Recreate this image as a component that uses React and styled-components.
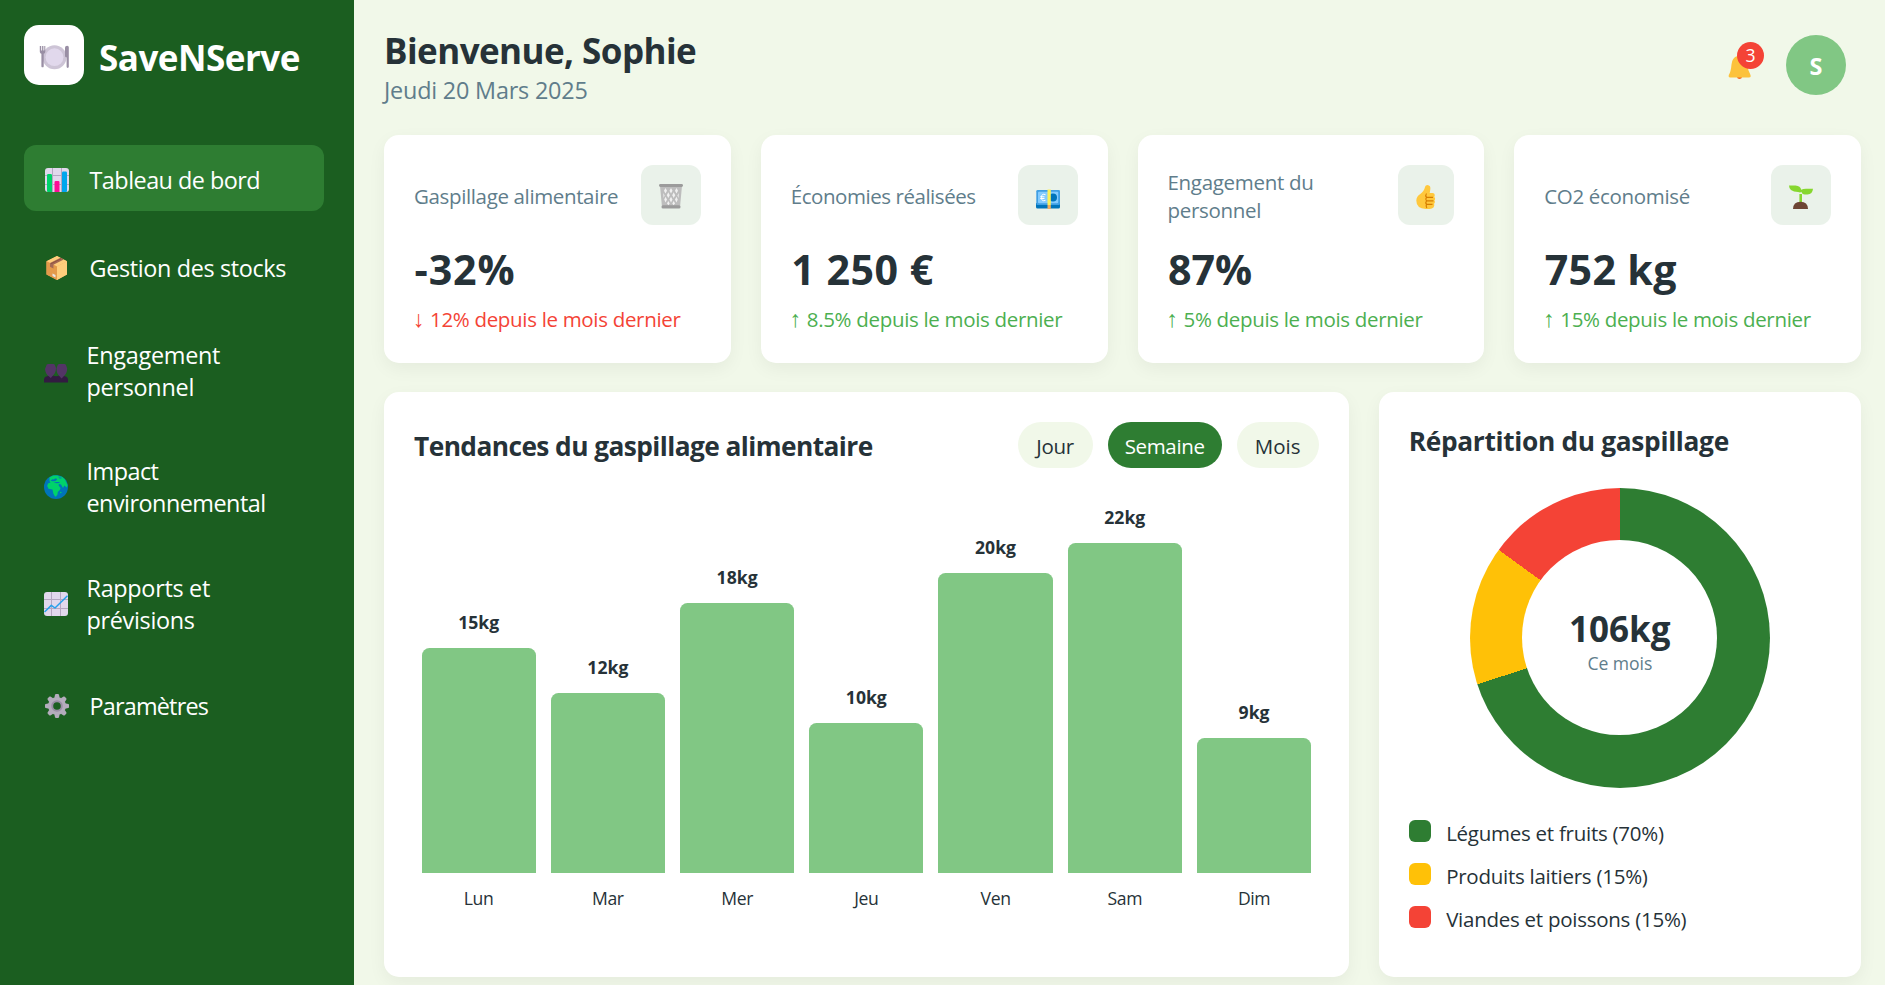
import React from "react";
import styled, { createGlobalStyle } from "styled-components";

const c = {
  dark: "#1b5e20",
  primary: "#2e7d32",
  light: "#81c784",
  bg: "#f1f8e9",
  text: "#263238",
  muted: "#607d8b",
  red: "#f44336",
  amber: "#ffc107",
  green: "#4caf50",
};

const GlobalStyle = createGlobalStyle`
  * { box-sizing: border-box; }
  body {
    margin: 0;
    overflow: hidden;
    background: ${c.bg};
    color: ${c.text};
    font-family: "Open Sans", "Noto Sans", sans-serif;
  }
  svg { display: block; flex: none; }
`;

const Page = styled.div`
  display: flex;
  height: 985px;
`;

/* ---------- Sidebar ---------- */

const Sidebar = styled.aside`
  flex: none;
  width: 354px;
  padding: 25px 30px 0 24px;
  background: ${c.dark};
  color: #fff;
`;

const Brand = styled.div`
  display: flex;
  align-items: center;
  gap: 15px;
  margin-bottom: 60px;
`;

const BrandMark = styled.div`
  display: grid;
  place-items: center;
  width: 60px;
  height: 60px;
  padding-top: 4px;
  border-radius: 15px;
  background: #fff;
`;

const BrandName = styled.div`
  padding-top: 5px;
  font-size: 35px;
  line-height: 40px;
  font-weight: 700;
  letter-spacing: -0.5px;
`;

const Nav = styled.nav`
  display: flex;
  flex-direction: column;
  gap: 22.5px;
`;

const NavItem = styled.a`
  display: flex;
  align-items: center;
  gap: 19px;
  height: ${(p) => (p.$tall ? 94 : 66)}px;
  padding: 0 19.5px;
  border-radius: 12px;
  background: ${(p) => (p.$active ? c.primary : "transparent")};
`;

const NavIcon = styled.span`
  display: flex;
  flex: none;
  justify-content: center;
  width: ${(p) => (p.$tall ? 24 : 27)}px;
  padding-top: 3px;
`;

const NavLabel = styled.span`
  padding-top: 3px;
  font-size: 23.4px;
  line-height: 32px;
  letter-spacing: ${(p) => p.$track}px;
`;

/* ---------- Header ---------- */

const Main = styled.main`
  flex: 1;
  padding: 30px 24px 0 30px;
`;

const Header = styled.header`
  display: flex;
  justify-content: space-between;
  align-items: flex-start;
  height: 105px;
  padding-right: 15px;
`;

const Welcome = styled.h1`
  margin: 0;
  padding: 1px 0 3px;
  font-size: 35px;
  line-height: 40px;
  font-weight: 700;
  letter-spacing: -0.56px;
`;

const Today = styled.div`
  color: ${c.muted};
  font-size: 23.4px;
  line-height: 32px;
  letter-spacing: -0.2px;
`;

const UserArea = styled.div`
  display: flex;
  align-items: flex-start;
  gap: 34px;
  padding-top: 5px;
`;

const Bell = styled.div`
  position: relative;
  margin-top: 19px;
`;

const Badge = styled.span`
  position: absolute;
  top: -12px;
  left: 9px;
  width: 27px;
  height: 27px;
  border-radius: 50%;
  background: ${c.red};
  color: #fff;
  font-size: 17.6px;
  line-height: 27px;
  text-align: center;
`;

const Avatar = styled.div`
  width: 60px;
  height: 60px;
  border-radius: 50%;
  background: ${c.light};
  color: #fff;
  font-size: 23.4px;
  font-weight: 700;
  line-height: 62px;
  text-align: center;
`;

/* ---------- Cards ---------- */

const Card = styled.section`
  border-radius: 15px;
  background: #fff;
  box-shadow: 0 6px 18px rgba(0, 0, 0, 0.05);
  padding: 30px;
`;

const Stats = styled.div`
  display: grid;
  grid-template-columns: repeat(4, 1fr);
  gap: 30px;
  height: 226.4px;
  margin-bottom: 30.6px;
`;

const StatHead = styled.div`
  display: flex;
  align-items: center;
  justify-content: space-between;
  height: 60px;
  margin-bottom: 16px;
`;

const StatTitle = styled.h3`
  margin: 0;
  padding-top: 2px;
  max-width: 206px;
  color: ${c.muted};
  font-size: 20.5px;
  font-weight: 400;
  line-height: 28px;
  letter-spacing: ${(p) => p.$track}px;
`;

const StatIcon = styled.div`
  display: grid;
  flex: none;
  place-items: center;
  width: ${(p) => p.$width}px;
  height: 60px;
  padding-top: 3px;
  border-radius: 12px;
  background: rgba(46, 125, 50, 0.1);
`;

const StatValue = styled.div`
  margin-bottom: 7.5px;
  padding-left: 0.5px;
  font-size: 41.2px;
  font-weight: 700;
  line-height: 56px;
  letter-spacing: ${(p) => p.$track}px;
`;

const Delta = styled.div`
  display: flex;
  color: ${(p) => (p.$down ? c.red : c.green)};
  font-size: 20.5px;
  line-height: 28px;
  letter-spacing: -0.32px;
  white-space: nowrap;
`;

const Arrow = styled.span`
  width: 16px;
  margin-left: -1px;
  margin-right: 1px;
  font-family: "Liberation Sans", sans-serif;
  font-size: 23px;
`;

/* ---------- Charts ---------- */

const Charts = styled.div`
  display: grid;
  grid-template-columns: 2fr 1fr;
  gap: 30px;
  height: 585px;
`;

const ChartHead = styled.div`
  display: flex;
  align-items: center;
  justify-content: space-between;
`;

const ChartTitle = styled.h2`
  margin: 0;
  padding-top: 2px;
  font-size: 26.3px;
  font-weight: 700;
  line-height: 34px;
  letter-spacing: ${(p) => p.$track}px;
`;

const Periods = styled.div`
  display: flex;
  gap: 15px;
`;

const Period = styled.button`
  width: ${(p) => p.$width}px;
  height: 46px;
  padding: 3px 0 0;
  border: 0;
  border-radius: 23px;
  background: ${(p) => (p.$active ? c.primary : c.bg)};
  color: ${(p) => (p.$active ? "#fff" : c.text)};
  font: 400 20.5px/28px "Open Sans", sans-serif;
  letter-spacing: ${(p) => p.$track}px;
`;

const Bars = styled.div`
  display: flex;
  align-items: flex-end;
  gap: 15px;
  height: 442px;
  padding: 0 7.5px;
`;

const BarColumn = styled.div`
  flex: 1;
  text-align: center;
  font-size: 17.6px;
  line-height: 24px;
`;

const BarValue = styled.div`
  margin-bottom: 14px;
  font-weight: 700;
`;

const Bar = styled.div`
  height: ${(p) => p.$kg * 15}px;
  margin-bottom: 13px;
  border-radius: 7.5px 7.5px 0 0;
  background: ${c.light};
`;

const BarDay = styled.div`
  letter-spacing: -0.4px;
`;

const Donut = styled.div`
  display: grid;
  place-items: center;
  width: 300px;
  height: 300px;
  margin: 30px auto;
  border-radius: 50%;
  background: conic-gradient(${c.primary} 0 70%, ${c.amber} 70% 85%, ${c.red} 85% 100%);
`;

const DonutHole = styled.div`
  display: flex;
  flex-direction: column;
  align-items: center;
  justify-content: center;
  gap: 4px;
  width: 195px;
  height: 195px;
  padding-top: 10px;
  border-radius: 50%;
  background: #fff;
`;

const DonutTotal = styled.div`
  font-size: 35px;
  font-weight: 700;
  line-height: 36px;
`;

const DonutCaption = styled.div`
  color: ${c.muted};
  font-size: 17.6px;
  line-height: 24px;
  letter-spacing: -0.06px;
`;

const Legend = styled.ul`
  display: flex;
  flex-direction: column;
  gap: 15px;
  margin: 0;
  padding: 0;
  list-style: none;
`;

const LegendItem = styled.li`
  display: flex;
  gap: 15px;
  height: 28px;
  font-size: 20.5px;
  letter-spacing: -0.26px;
`;

const Swatch = styled.span`
  width: 22.5px;
  height: 22.5px;
  margin-top: 2px;
  border-radius: 6px;
  background: ${(p) => p.$color};
`;

const LegendLabel = styled.span`
  padding-top: 2px;
  line-height: 27px;
`;

/* ---------- Icons ---------- */

const PlateIcon = () => (
  <svg width="30" height="25" viewBox="0 0 30 25">
    <circle cx="15.5" cy="12.2" r="12" fill="#cdc4d6" />
    <circle cx="15.5" cy="12.2" r="8.9" fill="#e1d8ec" />
    <path d="M.8.9v5.6c0 1.3.7 2 1.6 2.2v12.8a1.2 1.2 0 0 0 2.3 0V8.7c1-.2 1.6-.9 1.6-2.2V.9h-1v4.6h-.9V.9H3.100v4.600h-.9V.9z" fill="#998ea4" />
    <path d="M26 3.2C26 1.6 27 .8 28.2.8c1 0 1.6.7 1.6 1.7v19.3a1.100 1.100 0 0 1-2.200 0v-9.600c-1 0-1.600-.5-1.600-1.500z" fill="#998ea4" />
  </svg>
);

const BarChartIcon = () => (
  <svg width="24" height="24" viewBox="0 0 24 24">
    <rect width="24" height="24" rx="3" fill="#e1d8ec" />
    <path d="M0 7.5h24M0 16.5h24M7.5 0v24M16.5 0v24" stroke="#b4a7c1" strokeWidth="1" />
    <path d="M2 7.2Q2 6 3.2 6h2.6Q7 6 7 7.2V24H3q-1 0-1-1z" fill="#00d26a" />
    <path d="M9.5 14.2q0-1.200 1.200-1.200h2.600q1.200 0 1.200 1.200V24h-5z" fill="#fc0e95" />
    <path d="M17 4.7q0-1.200 1.200-1.200h2.600Q22 3.500 22 4.700V23q0 1-1 1h-4z" fill="#00a6ed" />
  </svg>
);

const BoxIcon = () => (
  <svg width="24" height="24" viewBox="0 0 24 24">
    <path d="M12 0 22 5.2v13.3L12 24 1.5 18.5V5.2z" fill="#f3ad61" />
    <path d="M12 0 22 5.2 12 10.5 1.5 5.2z" fill="#ffce7c" />
    <path d="M12 10.5 22 5.2v13.3L12 24z" fill="#ffce7c" />
    <path d="M1.5 5.2 12 10.5V24L1.5 18.5z" fill="#e39a4b" />
    <path d="m5 7 10.5-5.200 3.300 1.700L8.400 8.800v3.800L5 10.800z" fill="#a56953" />
    <path d="m6 7.700 10.500-5.200" stroke="#8a4f3b" strokeWidth=".8" />
    <path d="m7.5 17.5 3 1.500v2.600l-3-1.500z" fill="#e6e6e6" />
  </svg>
);

const PeopleIcon = () => (
  <svg width="24" height="24" viewBox="0 0 24 24">
    <path d="M0 23.500v-3C0 18.500 1.500 17.300 4 17l3-.5 5 .8 5-.8 3 .5c2.500.3 4 1.500 4 3.500v3z" fill="#321b41" />
    <path d="M4.300 5h5.200q1.500 0 1.500 1.500l1 2.500q0 5-3 7.500l-2.200 2.500L4.500 17Q1.300 14.500 1 10l1.200-3Q2.200 5 4.300 5z" fill="#533566" />
    <path d="M15.300 5h5.200q1.500 0 1.700 1.700l1 2.800q-.2 5-3.200 7.500L17.500 19.500 15.300 17q-2.800-2.500-2.800-7.500l1-3q0-1.500 1.800-1.500z" fill="#533566" />
  </svg>
);

const GlobeIcon = () => (
  <svg width="24" height="24" viewBox="0 0 24 24">
    <circle cx="12" cy="12" r="12" fill="#0074ba" />
    <path d="M5.500 2.500 9 .5h4.500l2 1L18 1.700l3 2.800L23.500 10l-.7 2.500-2.500-2L19 13l-2-3.500-1.500-.5-1.200.8 1.500 2.500.8.600-.8 2-2 2.200-.3 2.500-1.500 2h-1L9.300 18.500l-.8-4-4-.8L3.200 11 4 8.500l2.500-1L5.500 6z" fill="#00d26a" />
    <path d="m6.500 5.500 2-1.200 1.500.3 1-1h1.500l.5 1-1.500 1.500-3 .2zM9.500 7h6v1l-3 .3zM14 1.500l1.500 1h2v1h-2z" fill="#0074ba" />
    <circle cx="16.800" cy="17.500" r=".8" fill="#00d26a" />
  </svg>
);

const TrendIcon = () => (
  <svg width="24" height="24" viewBox="0 0 24 24">
    <rect width="24" height="24" rx="3" fill="#e1d8ec" />
    <path d="M0 7.500h24M0 16.500h24M7.500 0v24M16.500 0v24" stroke="#b4a7c1" strokeWidth="1" />
    <path d="m.5 20 6.800-6.600 3.700 2.600L23.500 3.800" fill="none" stroke="#26a0ec" strokeWidth="1.500" strokeLinejoin="round" />
  </svg>
);

const GearIcon = () => (
  <svg width="24" height="24" viewBox="0 0 24 24">
    {[0, 45, 90, 135].map((angle) => (
      <path key={angle} d="M9.500 3 10 .7Q10.200 0 11 0h2q.8 0 1 .7L14.500 3v18l-.5 2.300q-.2.700-1 .700h-2q-.8 0-1-.700L9.500 21z" fill="#b4acbc" transform={`rotate(${angle} 12 12)`} />
    ))}
    <circle cx="12" cy="12" r="9" fill="#b4acbc" />
    <circle cx="12" cy="12" r="4.800" fill={c.dark} stroke="#998ea4" strokeWidth="2" />
  </svg>
);

const TrashIcon = () => (
  <svg width="24" height="25" viewBox="0 0 24 25">
    <path d="M1 2h22l-2 21H3z" fill="#bdbdbd" />
    <path d="m6.500 4 1.500 2.800-1.500 2.800L5 6.800zM12 4l1.500 2.800L12 9.600l-1.500-2.800zM17.500 4 19 6.800l-1.500 2.800L16 6.800zM9.300 8.300l1.500 2.900-1.500 2.900-1.500-2.900zM14.700 8.300l1.500 2.900-1.500 2.900-1.500-2.900zM4.300 9l1.300 2.500-1 2.500zM19.800 9l-1.400 2.500 1.100 2.500zM6.600 12.800 8 15.600l-1.400 2.800-1.400-2.800zM12 12.800l1.500 2.800-1.500 2.800-1.500-2.800zM17.400 12.800l1.400 2.800-1.400 2.800-1.400-2.800zM9.300 17l1.400 2.500-1.200 1.800-1.500-1.800zM14.700 17l1.400 2.500-1.600 1.800-1.200-1.800z" fill="#f1f1f1" />
    <rect width="24" height="3" rx="1.400" fill="#9b9b9b" />
    <rect x="2.500" y="21.300" width="19" height="3.200" rx="1.500" fill="#9b9b9b" />
  </svg>
);

const EuroIcon = () => (
  <svg width="24" height="24" viewBox="0 0 24 24">
    <path d="M0 18h24v4q0 1.500-1.500 1.500h-21Q0 23.500 0 22z" fill="#0074ba" />
    <rect x=".3" y="5" width="23.700" height="15" rx="1.300" fill="#3f9fe4" />
    <rect x="2" y="6.700" width="20.200" height="11.500" rx="1" fill="#83cbff" />
    <circle cx="17" cy="12.500" r="4" fill="#0074ba" />
    <path d="M11.500 4.500h3.300V20h-3.300z" fill="#fcf05a" />
    <path d="M11.500 20h3.300v4h-3.300z" fill="#f3ad61" />
    <path d="M9.500 9.700Q5.500 8 5.500 12.500q0 4.500 4 2.800M4.200 11.800h4.300M4.200 13.500h4.300" fill="none" stroke="#fff" strokeWidth="1" />
  </svg>
);

const ThumbIcon = () => (
  <svg width="20" height="24" viewBox="0 0 20 24">
    <path d="M9.200 1.500Q9.500 0 11.500 0 15 .3 14.300 4.500L13.700 8h2.800q2.500.3 2.200 2.800-.1.900-.6 1.200 1.200.7 1 2-.2 1.300-.8 1.500.8.700.6 1.800-.2 1.200-1 1.500.5.600.4 1.700-.3 2.500-2.500 2.900-2 .6-6 .5Q.3 23.500.3 15.500q.2-4.500 4-6.500Q8 6.500 9.200 1.500z" fill="#ffc83d" />
    <path d="M10.500 8.500q-1.500 2 0 3.800-1.500 1.800 0 3.500-1.300 1.700 0 3.500-.8 1.700.3 3.700M10.500 12.300h6.500M10.500 15.800h7M10.500 19.300h6" fill="none" stroke="#d67d00" strokeWidth="1.200" />
  </svg>
);

const SproutIcon = () => (
  <svg width="24" height="24" viewBox="0 0 24 24">
    <path d="M11.700 18V9" stroke="#86d72f" strokeWidth="2.600" />
    <path d="M0 .5h6.500q5 .3 5.700 4.300Q14 3.700 17 3.700h7q-.5 5.500-5.500 5.800h-2.700q-2.800 0-3.300-2.700Q11.500 8 9 7 0 7 0 .5z" fill="#86d72f" />
    <path d="M4 24q.3-7.200 7.500-7.200T19 24z" fill="#6d4534" />
  </svg>
);

const BellIcon = () => (
  <svg width="24" height="25" viewBox="0 0 24 25">
    <path d="M9 23h5q-.3 2-2.500 2T9 23z" fill="#f8631b" />
    <path d="M9.500 2q0-2 2-2t2 2q5.500 1.500 6 8.500.3 6.500 3 10.500.7 2.500-1.500 2.500H2Q.2 23.500.7 21.200 3 17.500 3.500 10.500 4 3.500 9.500 2z" fill="#fcc23c" />
  </svg>
);

/* ---------- Data ---------- */

const navItems = [
  { label: "Tableau de bord", Icon: BarChartIcon, track: -0.52, active: true },
  { label: "Gestion des stocks", Icon: BoxIcon, track: -0.35 },
  { label: "Engagement personnel", Icon: PeopleIcon, track: -0.27, tall: true },
  { label: "Impact environnemental", Icon: GlobeIcon, track: -0.52, tall: true },
  { label: "Rapports et prévisions", Icon: TrendIcon, track: -0.3, tall: true },
  { label: "Paramètres", Icon: GearIcon, track: -0.8 },
];

const stats = [
  { title: "Gaspillage alimentaire", track: -0.36, Icon: TrashIcon, iconWidth: 60, value: "-32%", valueTrack: 0.88, delta: "12%", down: true },
  { title: "Économies réalisées", track: -0.45, Icon: EuroIcon, iconWidth: 60, value: "1 250 €", valueTrack: 0.5, delta: "8.5%" },
  { title: "Engagement du personnel", track: -0.3, Icon: ThumbIcon, iconWidth: 56, value: "87%", valueTrack: 0, delta: "5%" },
  { title: "CO2 économisé", track: -0.32, Icon: SproutIcon, iconWidth: 60, value: "752 kg", valueTrack: 0.3, delta: "15%" },
];

const periods = [
  { label: "Jour", width: 75, track: -0.3 },
  { label: "Semaine", width: 114, track: -0.35, active: true },
  { label: "Mois", width: 82, track: 0 },
];

const week = [
  ["Lun", 15],
  ["Mar", 12],
  ["Mer", 18],
  ["Jeu", 10],
  ["Ven", 20],
  ["Sam", 22],
  ["Dim", 9],
];

const legend = [
  ["Légumes et fruits (70%)", c.primary],
  ["Produits laitiers (15%)", c.amber],
  ["Viandes et poissons (15%)", c.red],
];

export default function App() {
  return (
    <Page>
      <GlobalStyle />
      <Sidebar>
        <Brand>
          <BrandMark>
            <PlateIcon />
          </BrandMark>
          <BrandName>SaveNServe</BrandName>
        </Brand>
        <Nav>
          {navItems.map(({ label, Icon, track, active, tall }) => (
            <NavItem key={label} $active={active} $tall={tall}>
              <NavIcon $tall={tall}>
                <Icon />
              </NavIcon>
              <NavLabel $track={track}>{label}</NavLabel>
            </NavItem>
          ))}
        </Nav>
      </Sidebar>
      <Main>
        <Header>
          <div>
            <Welcome>Bienvenue, Sophie</Welcome>
            <Today>Jeudi 20 Mars 2025</Today>
          </div>
          <UserArea>
            <Bell>
              <BellIcon />
              <Badge>3</Badge>
            </Bell>
            <Avatar>S</Avatar>
          </UserArea>
        </Header>
        <Stats>
          {stats.map(({ title, track, Icon, iconWidth, value, valueTrack, delta, down }) => (
            <Card key={title}>
              <StatHead>
                <StatTitle $track={track}>{title}</StatTitle>
                <StatIcon $width={iconWidth}>
                  <Icon />
                </StatIcon>
              </StatHead>
              <StatValue $track={valueTrack}>{value}</StatValue>
              <Delta $down={down}>
                <Arrow>{down ? "↓" : "↑"}</Arrow>
                <span>{delta} depuis le mois dernier</span>
              </Delta>
            </Card>
          ))}
        </Stats>
        <Charts>
          <Card>
            <ChartHead>
              <ChartTitle $track={-0.57}>Tendances du gaspillage alimentaire</ChartTitle>
              <Periods>
                {periods.map(({ label, width, track, active }) => (
                  <Period key={label} $width={width} $track={track} $active={active}>
                    {label}
                  </Period>
                ))}
              </Periods>
            </ChartHead>
            <Bars>
              {week.map(([day, kg]) => (
                <BarColumn key={day}>
                  <BarValue>{kg}kg</BarValue>
                  <Bar $kg={kg} />
                  <BarDay>{day}</BarDay>
                </BarColumn>
              ))}
            </Bars>
          </Card>
          <Card>
            <ChartTitle $track={-0.32}>Répartition du gaspillage</ChartTitle>
            <Donut>
              <DonutHole>
                <DonutTotal>106kg</DonutTotal>
                <DonutCaption>Ce mois</DonutCaption>
              </DonutHole>
            </Donut>
            <Legend>
              {legend.map(([label, color]) => (
                <LegendItem key={label}>
                  <Swatch $color={color} />
                  <LegendLabel>{label}</LegendLabel>
                </LegendItem>
              ))}
            </Legend>
          </Card>
        </Charts>
      </Main>
    </Page>
  );
}
